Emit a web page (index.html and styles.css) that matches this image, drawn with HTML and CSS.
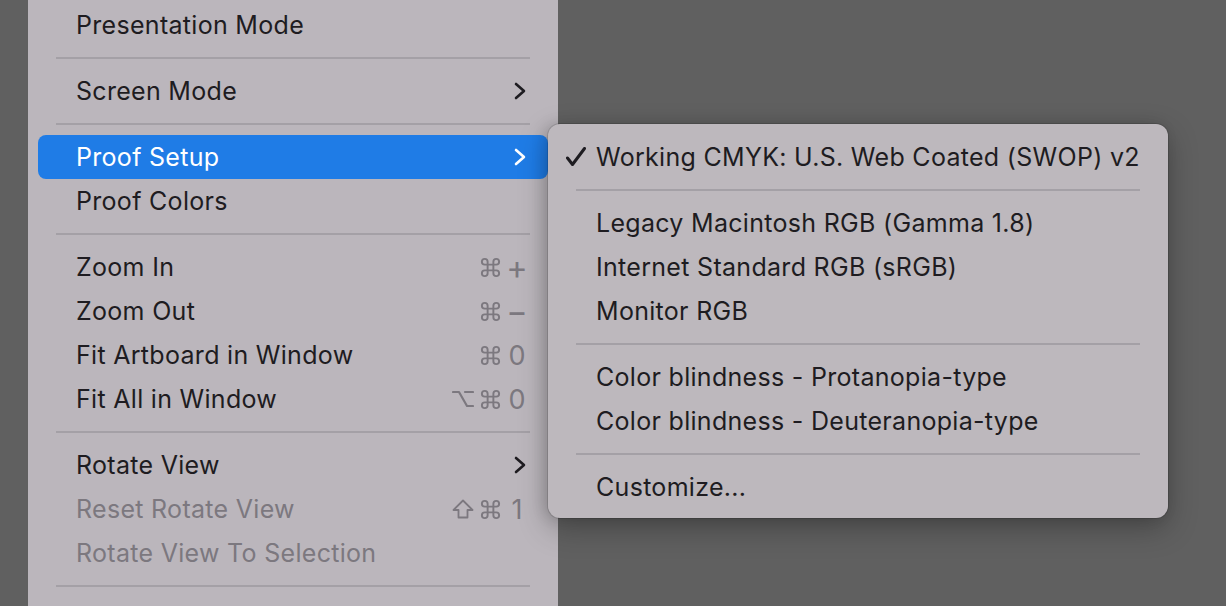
FILE: index.html
```html
<!DOCTYPE html>
<html>
<head>
<meta charset="utf-8">
<link rel="stylesheet" href="styles.css">
</head>
<body>
<div class="menu main">
  <div class="item"><span class="label">Presentation Mode</span></div>
  <div class="sep"></div>
  <div class="item"><span class="label">Screen Mode</span><svg class="chev" viewBox="0 0 12 18"><polyline points="2,2 10,9 2,16"/></svg></div>
  <div class="sep"></div>
  <div class="item active"><span class="label">Proof Setup</span><svg class="chev" viewBox="0 0 12 18"><polyline points="2,2 10,9 2,16"/></svg></div>
  <div class="item"><span class="label">Proof Colors</span></div>
  <div class="sep"></div>
  <div class="item"><span class="label">Zoom In</span><span class="keys"><svg class="mod cmd" viewBox="0 0 24 24"><path d="M15 6v12a3 3 0 1 0 3-3H6a3 3 0 1 0 3 3V6a3 3 0 1 0-3 3h12a3 3 0 1 0-3-3"/></svg><span class="key"><span class="sym">+</span></span></span></div>
  <div class="item"><span class="label">Zoom Out</span><span class="keys"><svg class="mod cmd" viewBox="0 0 24 24"><path d="M15 6v12a3 3 0 1 0 3-3H6a3 3 0 1 0 3 3V6a3 3 0 1 0-3 3h12a3 3 0 1 0-3-3"/></svg><span class="key"><span class="sym">−</span></span></span></div>
  <div class="item"><span class="label">Fit Artboard in Window</span><span class="keys"><svg class="mod cmd" viewBox="0 0 24 24"><path d="M15 6v12a3 3 0 1 0 3-3H6a3 3 0 1 0 3 3V6a3 3 0 1 0-3 3h12a3 3 0 1 0-3-3"/></svg><span class="key">0</span></span></div>
  <div class="item"><span class="label">Fit All in Window</span><span class="keys"><svg class="mod opt" viewBox="0 0 22 18"><path d="M1 2h6l8 14h6M13 2h8"/></svg><svg class="mod cmd" viewBox="0 0 24 24"><path d="M15 6v12a3 3 0 1 0 3-3H6a3 3 0 1 0 3 3V6a3 3 0 1 0-3 3h12a3 3 0 1 0-3-3"/></svg><span class="key">0</span></span></div>
  <div class="sep"></div>
  <div class="item"><span class="label">Rotate View</span><svg class="chev" viewBox="0 0 12 18"><polyline points="2,2 10,9 2,16"/></svg></div>
  <div class="item disabled"><span class="label">Reset Rotate View</span><span class="keys"><svg class="mod shift" viewBox="0 0 22 20"><path d="M11 1.5L20.5 11h-5v7.5h-9V11h-5z"/></svg><svg class="mod cmd" viewBox="0 0 24 24"><path d="M15 6v12a3 3 0 1 0 3-3H6a3 3 0 1 0 3 3V6a3 3 0 1 0-3 3h12a3 3 0 1 0-3-3"/></svg><span class="key">1</span></span></div>
  <div class="item disabled"><span class="label">Rotate View To Selection</span></div>
  <div class="sep"></div>
  <div class="item"><span class="label">&nbsp;</span></div>
</div>

<div class="menu sub">
  <div class="item"><svg class="check" viewBox="0 0 20 20"><polyline points="1.5,11 6.5,17.5 18.5,1.5"/></svg><span class="label">Working CMYK: U.S. Web Coated (SWOP) v2</span></div>
  <div class="sep"></div>
  <div class="item"><span class="label">Legacy Macintosh RGB (Gamma 1.8)</span></div>
  <div class="item"><span class="label">Internet Standard RGB (sRGB)</span></div>
  <div class="item"><span class="label">Monitor RGB</span></div>
  <div class="sep"></div>
  <div class="item"><span class="label">Color blindness - Protanopia-type</span></div>
  <div class="item"><span class="label">Color blindness - Deuteranopia-type</span></div>
  <div class="sep"></div>
  <div class="item"><span class="label">Customize...</span></div>
</div>
</body>
</html>
```

FILE: styles.css
```css
html, body {
  margin: 0;
  padding: 0;
}
body {
  width: 1226px;
  height: 606px;
  overflow: hidden;
  position: relative;
  background: #606060;
  font-family: Inter, "Noto Sans", "DejaVu Sans", sans-serif;
  font-size: 25px;
  color: #1e1c21;
}
.menu {
  position: absolute;
  box-sizing: border-box;
  display: flex;
  flex-direction: column;
}
.main {
  left: 28px;
  top: -9px;
  width: 530px;
  height: 615px;
  overflow: hidden;
  padding-top: 12px;
  background: #bbb6bc;
}
.sub {
  left: 548px;
  top: 124px;
  width: 620px;
  height: 394px;
  padding-top: 11px;
  background: #bdb8bd;
  border-radius: 12px;
  box-shadow: 0 0 0 1px rgba(0,0,0,0.12), 0 10px 30px rgba(0,0,0,0.28), -4px 0 14px rgba(0,0,0,0.12);
}
.item {
  height: 44px;
  flex: none;
  display: flex;
  align-items: center;
  margin: 0 10px;
  padding: 0 21px 0 38px;
  border-radius: 8px;
  white-space: nowrap;
}
.label {
  flex: 1 0 auto;
  letter-spacing: 0.3px;
}
.item.active {
  background: #1f7ce6;
  color: #ffffff;
}
.item.disabled {
  color: #7c787f;
}
.sep {
  height: 22px;
  flex: none;
  display: flex;
  align-items: center;
  margin: 0 28px;
}
.sep::before {
  content: "";
  display: block;
  width: 100%;
  height: 2px;
  background: #a4a0a6;
}
.chev {
  flex: none;
  width: 12px;
  height: 18px;
  margin-right: 1px;
  fill: none;
  stroke: #1e1c21;
  stroke-width: 2.6;
  stroke-linecap: round;
  stroke-linejoin: round;
}
.active .chev {
  stroke: #ffffff;
}
.keys {
  flex: none;
  display: flex;
  align-items: center;
  color: #7c787f;
}
.mod {
  flex: none;
  fill: none;
  stroke: #7c787f;
  stroke-width: 2;
  stroke-linecap: round;
  stroke-linejoin: round;
}
.cmd {
  width: 23px;
  height: 23px;
  margin-right: 5px;
}
.opt {
  width: 22px;
  height: 18px;
  margin-right: 5px;
  stroke-width: 2.2;
}
.shift {
  width: 22px;
  height: 20px;
  margin-right: 5px;
  stroke-width: 1.8;
}
.key {
  width: 20px;
  text-align: center;
  font-size: 27px;
}
.sym {
  display: inline-block;
  transform: scale(1.2);
}
.check {
  flex: none;
  width: 20px;
  height: 20px;
  margin-left: -30px;
  margin-right: 10px;
  fill: none;
  stroke: #1e1c21;
  stroke-width: 3;
  stroke-linecap: round;
  stroke-linejoin: round;
}
```
